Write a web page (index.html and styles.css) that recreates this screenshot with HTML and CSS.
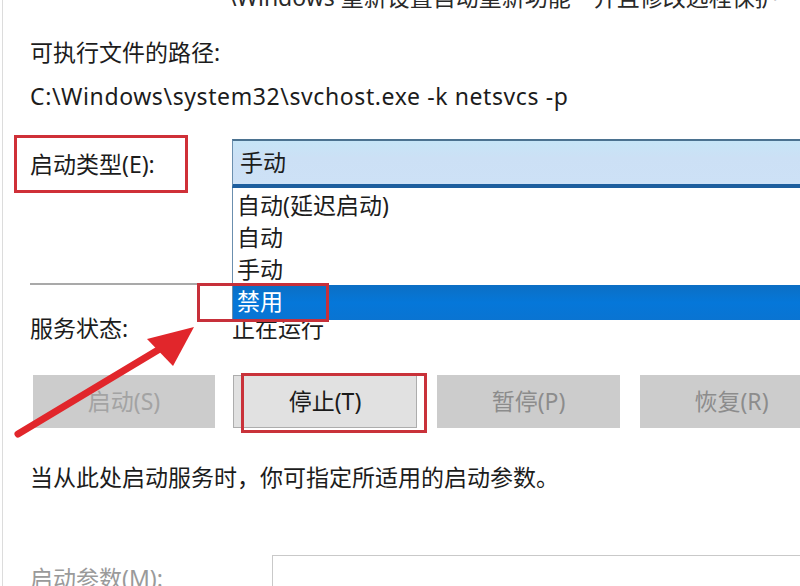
FILE: index.html
```html
<!DOCTYPE html>
<html lang="zh-CN">
<head>
<meta charset="utf-8">
<link rel="stylesheet" href="styles.css">
</head>
<body>
<div class="page">
  <div class="top"><span class="top-text">\Windows 重新设置自动重新功能　并且修改远程保护</span></div>
  <div class="line label-path">可执行文件的路径:</div>
  <div class="line path">C:\Windows\system32\svchost.exe -k netsvcs -p</div>

  <div class="type-row">
    <div class="type-label">启动类型(E):</div>
    <div class="combo">
      <div class="combo-head">手动</div>
      <ul class="dropdown">
        <li>自动(延迟启动)</li>
        <li>自动</li>
        <li>手动</li>
        <li class="selected">禁用</li>
      </ul>
      <div class="mark-box"></div>
    </div>
  </div>

  <div class="sep"></div>

  <div class="status-row">
    <div class="line status-label">服务状态:</div>
    <div class="line status-value">正在运行</div>
  </div>

  <div class="buttons">
    <div class="btn disabled light">启动(S)</div>
    <div class="btn active">停止(T)<span class="btn-mark"></span></div>
    <div class="btn disabled">暂停(P)</div>
    <div class="btn disabled">恢复(R)</div>
  </div>

  <div class="line hint">当从此处启动服务时，你可指定所适用的启动参数。</div>

  <div class="params-row">
    <div class="line params-label">启动参数(M):</div>
    <div class="params-input"></div>
  </div>

  <svg class="arrow" width="800" height="586" viewBox="0 0 800 586">
    <line x1="18" y1="434" x2="168" y2="344" stroke="#e1262b" stroke-width="7" stroke-linecap="round"/>
    <polygon points="194,327 147,339 173,366" fill="#e1262b"/>
  </svg>
</div>
</body>
</html>
```
FILE: styles.css
```css
html, body {
  margin: 0;
  padding: 0;
  background: #ffffff;
}
body {
  width: 800px;
  height: 586px;
  overflow: hidden;
  font-family: "Noto Sans", "Noto Sans CJK SC", sans-serif;
  font-size: 23px;
  color: #1c1c1c;
}
.page {
  position: relative;
  height: 586px;
  margin-left: 2px;
  border-left: 1px solid #dcdcdc;
  padding-left: 27px;
  box-sizing: border-box;
}
.line {
  height: 30px;
  line-height: 30px;
  white-space: nowrap;
}
.top {
  height: 12px;
  overflow: hidden;
  padding-left: 198px;
}
.top-text {
  display: block;
  margin-top: -17px;
  line-height: 28px;
  color: #2a2a2a;
  white-space: nowrap;
}
.label-path {
  margin-top: 25px;
}
.path {
  margin-top: 14px;
  letter-spacing: 0.6px;
}
.type-row {
  display: flex;
  align-items: flex-start;
  margin-top: 24px;
  margin-left: -16px;
  height: 58px;
}
.type-label {
  box-sizing: border-box;
  width: 174px;
  height: 58px;
  border: 3px solid #cf3038;
  padding-left: 13px;
  line-height: 52px;
  white-space: nowrap;
}
.combo {
  position: relative;
  flex: 1;
  margin-left: 44px;
  margin-top: 4px;
  margin-right: -4px;
}
.combo-head {
  box-sizing: border-box;
  height: 49px;
  border-top: 2px solid #4b7290;
  border-bottom: 4px solid #1d5e9e;
  border-left: 1px solid #6b8fae;
  background: linear-gradient(#c6e5f7, #cce0f5 40%, #cde1f6);
  padding-left: 7px;
  line-height: 42px;
}
.dropdown {
  position: absolute;
  top: 49px;
  left: 0;
  right: 0;
  margin: 0;
  padding: 0;
  list-style: none;
  background: #ffffff;
  border-left: 1px solid #6b8fae;
}
.dropdown li {
  height: 32px;
  line-height: 32px;
  padding-left: 4px;
  white-space: nowrap;
}
.dropdown li:first-child {
  margin-top: 1px;
}
.dropdown li.selected {
  height: 35px;
  line-height: 33px;
  background: linear-gradient(#0c6fc4, #0577d9 50%, #0a74d2);
  color: #ffffff;
}
.mark-box {
  position: absolute;
  left: -35px;
  top: 144px;
  width: 132px;
  height: 39px;
  border: 3px solid #c7303a;
  box-sizing: border-box;
}
.sep {
  margin-top: 90px;
  width: 210px;
  height: 2px;
  background: #a9a9a9;
}
.status-row {
  display: flex;
  margin-top: 28px;
}
.status-label {
  width: 202px;
}
.status-value {
  margin-top: 0;
}
.buttons {
  display: flex;
  gap: 20px;
  margin-top: 32px;
  margin-left: 3px;
}
.btn {
  position: relative;
  flex: none;
  box-sizing: border-box;
  width: 183px;
  height: 53px;
  line-height: 51px;
  text-align: center;
  background: #cccccc;
  color: #8c8c8c;
  border: 1px solid #cccccc;
  white-space: nowrap;
}
.btn.light {
  color: #a3a3a3;
  width: 182px;
}
.btn.active {
  background: #e1e1e1;
  color: #1a1a1a;
  border: 1px solid #adadad;
  width: 184px;
  margin-left: -2px;
}
.btn-mark {
  position: absolute;
  left: 7px;
  top: -3px;
  width: 186px;
  height: 60px;
  border: 3px solid #c9323a;
  box-sizing: border-box;
}
.hint {
  margin-top: 34px;
}
.params-row {
  display: flex;
  margin-top: 63px;
}
.params-label {
  width: 242px;
  padding-top: 8px;
  color: #9a9a9a;
}
.params-input {
  flex: 1;
  height: 60px;
  border: 1px solid #c9c9c9;
  border-right: none;
  background: #ffffff;
}
.arrow {
  position: absolute;
  left: -3px;
  top: 0;
}
```
